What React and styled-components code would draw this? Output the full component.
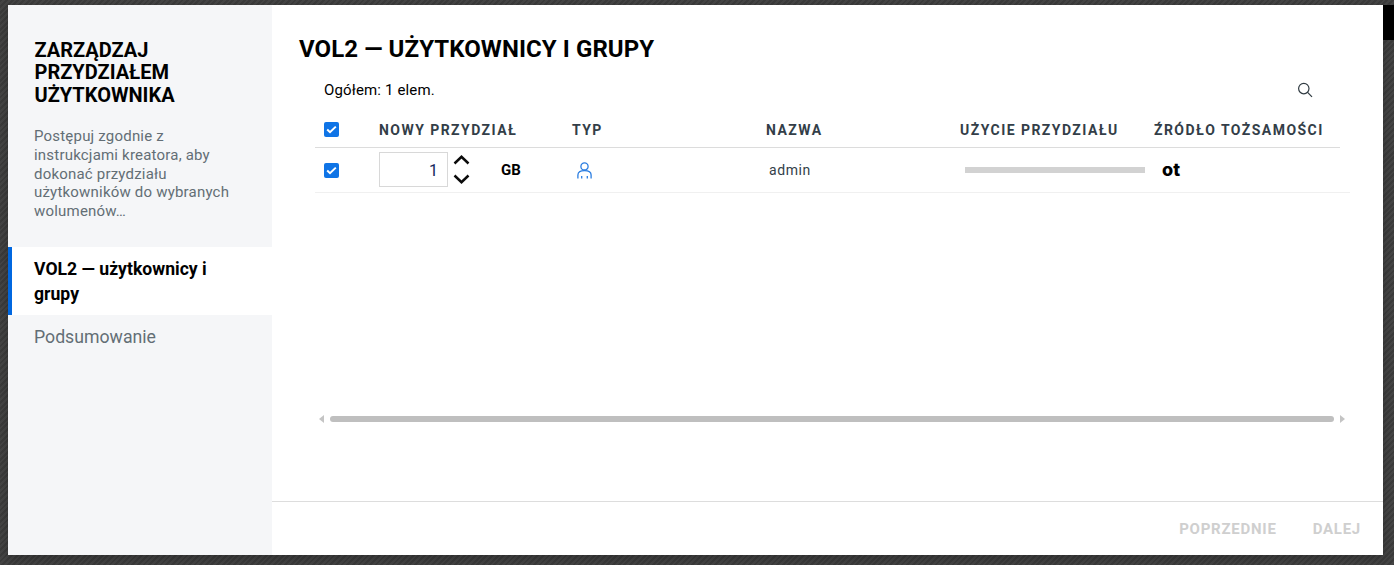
import React from 'react';
import styled, { createGlobalStyle } from 'styled-components';

const GlobalStyle = createGlobalStyle`
  html, body {
    margin: 0;
    padding: 0;
    height: 100%;
    overflow: hidden;
    font-family: Roboto, "Liberation Sans", sans-serif;
  }
`;

const Backdrop = styled.div`
  position: relative;
  width: 1394px;
  height: 565px;
  box-sizing: border-box;
  padding: 5px 11px 10px 8px;
  background: repeating-linear-gradient(135deg, #3b3b3b 0 2px, #454545 2px 4px);
`;

const CornerBlock = styled.div`
  position: absolute;
  top: 5px;
  right: 0;
  width: 11px;
  height: 35px;
  background: #000;
`;

const Modal = styled.div`
  display: flex;
  height: 100%;
  background: #fff;
  box-shadow: 0 4px 10px rgba(0, 0, 0, 0.25);
`;

const Sidebar = styled.aside`
  width: 264px;
  flex-shrink: 0;
  background: #f5f6f8;
  padding-top: 34px;
`;

const SideTitle = styled.h2`
  margin: 0 26px 21px 26.5px;
  font-size: 20px;
  line-height: 22.4px;
  font-weight: 700;
  color: #000;
`;

const SideText = styled.p`
  margin: 0 26px 26px;
  width: 212px;
  font-size: 15px;
  line-height: 18.75px;
  letter-spacing: 0.2px;
  color: #636e75;
`;

const Step = styled.div`
  padding: ${(p) => (p.$active ? '10px 40px 8px 22px' : '10px 26px')};
  border-left: ${(p) => (p.$active ? '4px solid #0067e0' : 'none')};
  background: ${(p) => (p.$active ? '#fff' : 'transparent')};
  color: ${(p) => (p.$active ? '#000' : '#636e75')};
  font-size: ${(p) => (p.$active ? '17.6px' : '17.7px')};
  line-height: 25px;
  font-weight: ${(p) => (p.$active ? 700 : 400)};
`;

const Main = styled.main`
  flex: 1;
  min-width: 0;
  display: flex;
  flex-direction: column;
`;

const Content = styled.div`
  flex: 1;
  padding: 29px 33px 0 27px;
`;

const Title = styled.h1`
  margin: 0;
  font-size: 24px;
  line-height: 30px;
  font-weight: 700;
  letter-spacing: 0.08px;
  color: #000;
`;

const Table = styled.div`
  margin: 16px 0 0 16px;
`;

const Toolbar = styled.div`
  display: flex;
  align-items: center;
  justify-content: space-between;
  height: 20px;
  padding: 0 37px 0 9px;
  font-size: 15px;
  letter-spacing: 0.15px;
  color: #000;
`;

const SearchButton = styled.span`
  display: flex;
  color: #303b42;
`;

const HeaderRow = styled.div`
  display: grid;
  grid-template-columns: 55px 193px 194px 194px 194px 1fr;
  align-items: center;
  height: 35px;
  margin: 12px 10px 0 0;
  padding-left: 9px;
  border-bottom: 1px solid #dcdcdc;
`;

const HeaderCell = styled.div`
  font-size: 14px;
  font-weight: 700;
  letter-spacing: 1.45px;
  color: #333e48;
  white-space: nowrap;
`;

const DataRow = styled(HeaderRow)`
  height: 44px;
  margin: 0;
  border-bottom-color: #f0f0f0;
`;

const Check = styled.span`
  display: flex;
  align-items: center;
  justify-content: center;
  width: 15px;
  height: 15px;
  border-radius: 2px;
  background: #0f74e6;
`;

const QuotaCell = styled.div`
  display: flex;
  align-items: center;
`;

const QuotaInput = styled.div`
  box-sizing: border-box;
  width: 69px;
  height: 35px;
  margin-bottom: 2px;
  padding-right: 9px;
  border: 1px solid #d8d8d8;
  font-size: 16px;
  line-height: 35px;
  text-align: right;
  color: #14285a;
`;

const Stepper = styled.div`
  display: flex;
  flex-direction: column;
  gap: 9px;
  margin: 0 0 2px 5px;
`;

const Unit = styled.span`
  margin-left: 31px;
  font-size: 15px;
  font-weight: 700;
  color: #000;
`;

const TypeCell = styled.div`
  display: flex;
  padding-left: 5px;
`;

const NameCell = styled.div`
  padding-left: 3px;
  font-size: 14px;
  letter-spacing: 0.6px;
  color: #333e48;
`;

const UsageCell = styled.div`
  padding-left: 5px;
`;

const UsageBar = styled.div`
  width: 180px;
  height: 6px;
  background: #d2d2d2;
`;

const SourceCell = styled.div`
  padding-left: 8px;
  font-family: Inter, Roboto, sans-serif;
  font-size: 18px;
  line-height: 18px;
  font-weight: 800;
  color: #000;
`;

const ScrollArea = styled.div`
  display: flex;
  align-items: center;
  gap: 6px;
  margin: 222px 5px 0 4px;
`;

const Arrow = styled.span`
  width: 0;
  height: 0;
  border-top: 4px solid transparent;
  border-bottom: 4px solid transparent;
  border-${(p) => (p.$left ? 'right' : 'left')}: 5px solid #c4c4c4;
`;

const Thumb = styled.div`
  flex: 1;
  height: 6px;
  border-radius: 3px;
  background: #bfbfbf;
`;

const Footer = styled.footer`
  display: flex;
  justify-content: flex-end;
  align-items: center;
  gap: 36px;
  height: 53px;
  padding-right: 22px;
  border-top: 1px solid #dddddd;
`;

const FooterButton = styled.span`
  font-size: 15px;
  font-weight: 700;
  letter-spacing: 0.75px;
  color: #cfcfcf;
`;

const CheckBox = () => (
  <Check>
    <svg width="11" height="9" viewBox="0 0 11 9" fill="none">
      <path d="M1.2 4.6 L4 7.2 L9.8 1.6" stroke="#fff" strokeWidth="2" />
    </svg>
  </Check>
);

const Chevron = ({ up }) => (
  <svg width="17" height="10" viewBox="0 0 17 10" fill="none">
    <path d={up ? 'M1.5 8.5 L8.5 1.8 L15.5 8.5' : 'M1.5 1.5 L8.5 8.2 L15.5 1.5'} stroke="#0b0b0b" strokeWidth="2.5" />
  </svg>
);

const UserIcon = () => (
  <svg width="15" height="17" viewBox="0 0 15 17" fill="none" stroke="#2a7de1" strokeWidth="1.3">
    <circle cx="7.5" cy="4.4" r="3.6" />
    <path d="M0.9 16.5 V13 C0.9 10 3.6 8.6 7.5 8.6 C11.4 8.6 14.1 10 14.1 13 V16.5" />
    <path d="M4.7 14 V16.5 M10.3 14 V16.5" />
  </svg>
);

const SearchIcon = () => (
  <svg width="16" height="16" viewBox="0 0 16 16" fill="none" stroke="currentColor" strokeWidth="1.2">
    <circle cx="6.8" cy="6.6" r="5.2" />
    <path d="M10.6 10.4 L15 14.9" />
  </svg>
);

const App = () => (
  <>
    <GlobalStyle />
    <Backdrop>
      <CornerBlock />
      <Modal>
        <Sidebar>
          <SideTitle>ZARZĄDZAJ PRZYDZIAŁEM UŻYTKOWNIKA</SideTitle>
          <SideText>Postępuj zgodnie z instrukcjami kreatora, aby dokonać przydziału użytkowników do wybranych wolumenów…</SideText>
          <Step $active>VOL2 — użytkownicy i grupy</Step>
          <Step>Podsumowanie</Step>
        </Sidebar>
        <Main>
          <Content>
            <Title>VOL2 — UŻYTKOWNICY I GRUPY</Title>
            <Table>
              <Toolbar>
                <span>Ogółem: 1 elem.</span>
                <SearchButton>
                  <SearchIcon />
                </SearchButton>
              </Toolbar>
              <HeaderRow>
                <CheckBox />
                <HeaderCell>NOWY PRZYDZIAŁ</HeaderCell>
                <HeaderCell>TYP</HeaderCell>
                <HeaderCell>NAZWA</HeaderCell>
                <HeaderCell>UŻYCIE PRZYDZIAŁU</HeaderCell>
                <HeaderCell>ŹRÓDŁO TOŻSAMOŚCI</HeaderCell>
              </HeaderRow>
              <DataRow>
                <CheckBox />
                <QuotaCell>
                  <QuotaInput>1</QuotaInput>
                  <Stepper>
                    <Chevron up />
                    <Chevron />
                  </Stepper>
                  <Unit>GB</Unit>
                </QuotaCell>
                <TypeCell>
                  <UserIcon />
                </TypeCell>
                <NameCell>admin</NameCell>
                <UsageCell>
                  <UsageBar />
                </UsageCell>
                <SourceCell>ot</SourceCell>
              </DataRow>
              <ScrollArea>
                <Arrow $left />
                <Thumb />
                <Arrow />
              </ScrollArea>
            </Table>
          </Content>
          <Footer>
            <FooterButton>POPRZEDNIE</FooterButton>
            <FooterButton>DALEJ</FooterButton>
          </Footer>
        </Main>
      </Modal>
    </Backdrop>
  </>
);

export default App;
